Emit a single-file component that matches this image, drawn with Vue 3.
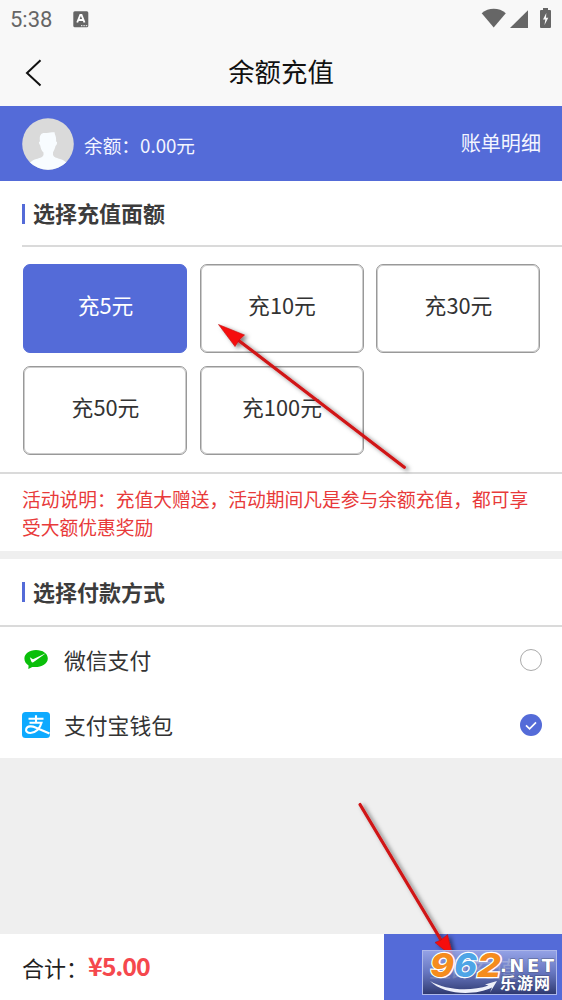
<script setup>
import { ref } from 'vue'

const amounts = [5, 10, 30, 50, 100]
const selected = ref(5)
const method = ref('alipay')
</script>

<template>
  <div class="screen">
    <header class="status">
      <span class="clock">5:38</span>
      <svg class="note" width="16" height="17" viewBox="0 0 16 17">
        <rect x="0.3" y="0.3" width="15" height="16" rx="1.5" fill="#666" />
        <path d="M4.2 11.5 7.3 4h1.2l3 7.5M5.5 9h5" fill="none" stroke="#fff" stroke-width="1.9" />
        <path d="M8 14.6h1.4M10.4 14.6h1.4M12.8 14.6h1.4" stroke="#ddd" stroke-width="1.2" />
      </svg>
      <svg class="signals" width="72" height="22" viewBox="0 0 72 22">
        <path d="M.7 5.2C7.500 -.6 18 -.6 24.800 5.200L12.700 19.500Z" fill="#666" />
        <path d="M47 2.300V20H29Z" fill="#666" />
        <path d="M62 0h5v2h2q1 0 1 1v16q0 1-1 1h-9q-1 0-1-1V3q0-1 1-1h2Z" fill="#666" />
        <path d="M65.3 5 62 11.4h2.3L63.5 17 67.3 9.8H65Z" fill="#f8f8f8" />
      </svg>
    </header>

    <nav class="nav">
      <svg class="back" width="18" height="28" viewBox="0 0 18 28">
        <path d="M15.500 1.200 2 14 15.500 26.500" fill="none" stroke="#111" stroke-width="2" />
      </svg>
      <h1>余额充值</h1>
    </nav>

    <section class="balance">
      <svg class="avatar" width="52" height="52" viewBox="0 0 52 52">
        <defs><clipPath id="face"><circle cx="26" cy="26" r="25.8" /></clipPath></defs>
        <g clip-path="url(#face)">
          <rect width="52" height="52" fill="#dadada" />
          <path d="M18.200 27.500C16.500 25 16.500 23.500 18 23.500 17 18 19 15 22 15 25 15.500 29 13.300 33 14.600 31.700 15.700 34.800 18 34 23.500 35.700 23.500 35.300 26.500 33.500 28 33 31 31.500 33 31 34.500V37C33 41.500 40.500 39.500 44.500 45L45 53H7L8 45C12 39.500 19.500 41.500 21.500 37V34.500C19.800 33 18.800 31 18.200 27.500Z" fill="#f8fcff" />
        </g>
      </svg>
      <span class="sum">余额：0.00元</span>
      <span class="bill">账单明细</span>
    </section>

    <section class="panel">
      <div class="head first"><i></i><h2>选择充值面额</h2></div>
      <div class="grid">
        <button v-for="a in amounts" :key="a" :class="{ on: selected === a }" @click="selected = a">充{{ a }}元</button>
      </div>
      <p class="notice">活动说明：充值大赠送，活动期间凡是参与余额充值，都可享受大额优惠奖励</p>
    </section>

    <section class="panel pay">
      <div class="head second"><i></i><h2>选择付款方式</h2></div>
      <div class="row" @click="method = 'wechat'">
        <svg class="logo" width="28" height="28" viewBox="0 0 28 28">
          <path d="M14 5C7.300 5 2.400 8.700 2.400 13.500c0 3 1.500 5.300 4.200 7L6.300 24l4-2.100C18 23 25.800 19.500 25.800 13.500 25.800 8.500 20.800 5 14 5Z" fill="#0abf0a" />
          <path d="M7.800 12.200 11 14.300 24.200 8 11.300 17.300Q9.800 17.800 9.200 16.200Z" fill="#fff" />
        </svg>
        <span>微信支付</span>
        <em class="radio" :class="{ on: method === 'wechat' }"></em>
      </div>
      <div class="row" @click="method = 'alipay'">
        <svg class="logo" width="28" height="28" viewBox="0 0 28 28">
          <rect y="1" width="28" height="26" rx="3.500" fill="#0eaaff" />
          <path d="M6.500 7.700H21.500M14 4.300V11.500M7.500 11.700H19.500C18 17.500 13.500 22 8.500 22 5 22 3.600 20 4.200 18 5.200 14.800 10 14.800 13.500 16.500L27.500 22.500" fill="none" stroke="#fff" stroke-width="2.100" />
        </svg>
        <span>支付宝钱包</span>
        <em class="radio" :class="{ on: method === 'alipay' }">
          <svg v-if="method === 'alipay'" width="22" height="22" viewBox="0 0 22 22">
            <path d="M6 11.300 9.600 14.800 16 8.300" fill="none" stroke="#fff" stroke-width="1.700" />
          </svg>
        </em>
      </div>
    </section>

    <footer class="bar">
      <span class="label">合计：</span><strong>¥5.00</strong>
      <button class="submit">立即充值</button>
    </footer>

    <svg class="overlay" width="562" height="1000" viewBox="0 0 562 1000">
      <defs>
        <filter id="shade" x="-20%" y="-20%" width="140%" height="140%">
          <feDropShadow dx="3" dy="2" stdDeviation="2" flood-color="#000" flood-opacity=".5" />
        </filter>
        <linearGradient id="plate" x1="0" y1="0" x2="0" y2="1">
          <stop offset="0" stop-color="#a4b0ea" stop-opacity=".8" />
          <stop offset=".5" stop-color="#6a78ba" stop-opacity=".82" />
          <stop offset="1" stop-color="#2b3568" stop-opacity=".95" />
        </linearGradient>
      </defs>
      <g filter="url(#shade)">
        <path d="M238 340 404.300 467.300" stroke="#d01317" stroke-width="3.200" stroke-linecap="round" />
        <path d="M218.500 324.500 244.500 335 239.500 339.500 235 346.500Z" fill="#f50808" stroke="#c01010" stroke-width=".6" />
      </g>
      <g filter="url(#shade)">
        <path d="M360 804.500 441 940" stroke="#d01317" stroke-width="3.200" stroke-linecap="round" />
        <path d="M453 957 435 942.500 441 940 447.500 934.500Z" fill="#f50808" stroke="#c01010" stroke-width=".6" />
      </g>
      <rect x="422.500" y="950.500" width="134" height="44" fill="url(#plate)" stroke="#aeb8ea" />
      <path d="M430 981C443 995 475 996 492 987.500L490 992.500 497 981 485 984.500 488.500 985.500C470 992 445 990 430 981Z" fill="#eef0fa" />
      <g class="digits">
        <text x="430" y="977" textLength="24" lengthAdjust="spacingAndGlyphs" fill="#f58c1e">9</text>
        <text x="454" y="977" textLength="23" lengthAdjust="spacingAndGlyphs" fill="#4ea5e6">6</text>
        <text x="477" y="977" textLength="24" lengthAdjust="spacingAndGlyphs" fill="#f58c1e">2</text>
      </g>
      <text class="net" x="500" y="972" textLength="54">.NET</text>
      <text class="site" x="500" y="989" textLength="50">乐游网</text>
    </svg>
  </div>
</template>

<style>
body { margin: 0; }
</style>

<style scoped>
* { box-sizing: border-box; }
.screen { position: relative; display: flex; flex-direction: column; width: 562px; height: 1000px; overflow: hidden; background: #efefef; color: #333; font-family: "Noto Sans CJK SC", sans-serif; }
h1, h2, p { margin: 0; font-weight: 400; }
button { padding: 0; font-family: inherit; }
.status { display: flex; height: 40px; padding: 0 9px 0 10px; background: #f8f8f8; color: #666; flex: none; }
.clock { width: 63px; font: 22px/40px Roboto, sans-serif; }
.note { margin-top: 11px; }
.signals { margin: 8px 0 0 auto; }
.nav { display: flex; align-items: center; height: 66px; flex: none; padding-left: 25px; background: #f8f8f8; color: #111; }
.back { margin-top: -1px; }
.nav h1 { flex: 1; padding-right: 43px; text-align: center; font-size: 26.400px; line-height: 40px; margin-top: -5px; }
.balance { display: flex; align-items: center; height: 75px; padding: 0 21px 0 22px; background: #546bd8; color: #f3f5ff; flex: none; }
.avatar { margin-top: 1px; }
.sum { margin: 3px 0 0 10px; font-size: 18.700px; line-height: 30px; }
.bill { margin: -2px 0 0 auto; font-size: 20.100px; line-height: 30px; }
.panel { flex: none; background: #fff; height: 370px; }
.head { display: flex; align-items: center; height: 66px; border-bottom: 2px solid #dadada; }
.head.first { margin-left: 22px; }
.head.second { height: 68px; padding-left: 22px; }
.head i { width: 3px; height: 20px; background: #546bd8; margin-right: 8px; }
.head.first i { margin-top: 2px; }
.head h2 { font-size: 22px; font-weight: 700; line-height: 32px; margin-top: -2px; color: #3c3c3c; }
.grid { display: grid; grid-template-columns: repeat(3, 164px); grid-auto-rows: 89px; gap: 13px 12.500px; height: 227px; padding: 17px 0 0 23px; border-bottom: 2px solid #dadada; }
.grid button { border: 1px solid #999; box-shadow: inset 0 0 0 1px #ccc; border-radius: 7px; background: #fff; color: #333; font-size: 21.800px; line-height: 32px; padding: 0 0 8px 1px; }
.grid button.on { border-color: #546bd8; background: #546bd8; box-shadow: none; color: #fff; }
.notice { padding: 11px 22px; color: #e83a3a; font-size: 18.750px; line-height: 28px; }
.pay { margin-top: 8px; height: 199px; }
.row { display: flex; align-items: center; height: 65.500px; padding: 0 20px 0 22px; font-size: 21.800px; }
.logo { margin-top: -1px; }
.row span { margin: 0 0 0 14px; line-height: 32px; }
.radio { display: block; width: 22px; height: 22px; margin-left: auto; border: 1px solid #aaa; border-radius: 50%; }
.radio.on { border: 0; background: #546bd8; }
.radio svg { display: block; }
.bar { display: flex; align-items: center; height: 66px; margin-top: auto; flex: none; padding-left: 22px; background: #fff; }
.label { font-size: 22px; line-height: 32px; color: #222; }
.bar strong { margin-top: -4px; color: #f5484d; font-size: 25px; line-height: 32px; font-weight: 700; letter-spacing: -1.100px; }
.submit { width: 178px; height: 66px; margin-left: auto; border: 0; background: #546bd8; color: #fff; font-size: 22px; }
.overlay { position: absolute; inset: 0; pointer-events: none; }
.digits { font: italic 800 33px Inter, sans-serif; stroke: #fff; stroke-width: 2.400px; paint-order: stroke; }
.net { font: 700 18px "DejaVu Sans", sans-serif; fill: #fff; stroke: #566086; stroke-width: 1px; paint-order: stroke; }
.site { font: 700 16px "Noto Sans CJK SC", sans-serif; fill: #fff; stroke: #46517f; stroke-width: 1px; paint-order: stroke; }
</style>
